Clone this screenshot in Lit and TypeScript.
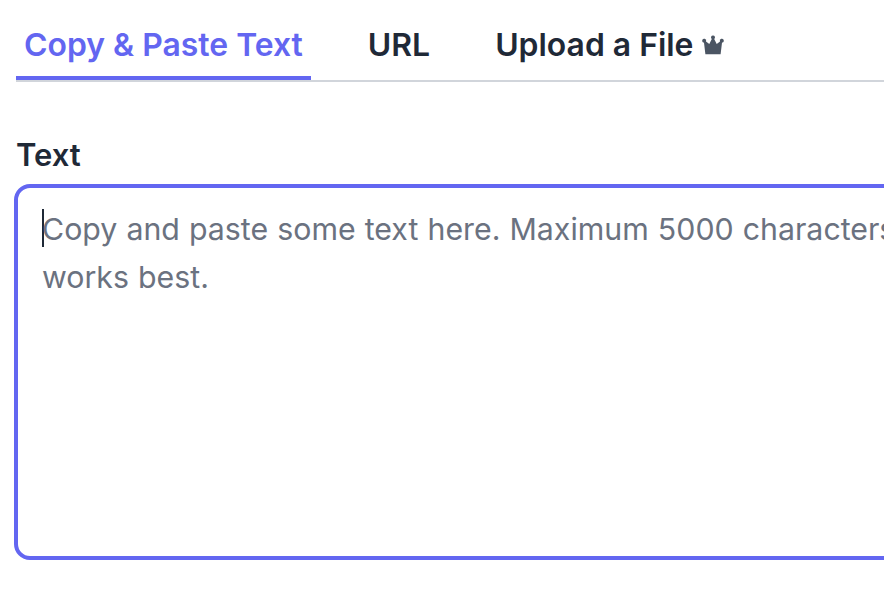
import { LitElement, html, css } from "lit";
import { customElement } from "lit/decorators.js";

@customElement("app-root")
export class AppRoot extends LitElement {
  static styles = css`
    :host {
      display: block;
      width: 884px;
      height: 606px;
      overflow: hidden;
      background: #fff;
      font-family: Inter, "Liberation Sans", sans-serif;
      color: #1f2937;
    }
    .page {
      width: 1200px;
      padding: 0 0 0 16px;
      box-sizing: border-box;
    }
    .tabs {
      display: flex;
      gap: 49px;
      height: 82px;
      box-sizing: border-box;
      border-bottom: 2px solid #d1d5db;
    }
    .tab {
      display: flex;
      align-items: center;
      gap: 8px;
      height: 80px;
      box-sizing: border-box;
      padding: 15px 8px 5px;
      font-size: 31.9px;
      font-weight: 600;
      line-height: 40px;
      white-space: nowrap;
    }
    .tab.active {
      color: #6366f1;
      border-bottom: 4px solid #6366f1;
      padding-bottom: 1px;
    }
    .crown {
      width: 24px;
      height: 20px;
      flex: none;
      fill: #4b5563;
      margin-bottom: 1px;
    }
    .label {
      margin: 55px 0 0;
      font-size: 31px;
      font-weight: 600;
      line-height: 36px;
    }
    .box {
      margin: 11px 0 0 -2px;
      height: 376px;
      box-sizing: border-box;
      border: 4px solid #6366f1;
      border-radius: 16px;
      padding: 17px 24px;
      font-size: 30.3px;
      word-spacing: 0.6px;
      line-height: 48px;
      color: #6b7280;
      white-space: nowrap;
    }
    .caret {
      display: inline-block;
      width: 0;
      height: 38px;
      border-left: 2px solid #1f2937;
      margin-right: -2px;
      vertical-align: -7px;
    }
  `;

  render() {
    return html`
      <div class="page">
        <nav class="tabs">
          <div class="tab active">Copy &amp; Paste Text</div>
          <div class="tab">URL</div>
          <div class="tab">
            Upload a File
            <svg class="crown" viewBox="0 0 24 20" aria-hidden="true">
              <path d="M12 0.500a2 2 0 0 1 1.200 3.600l2.500 5 3.300-2.600a2 2 0 1 1 2 1.200L19.600 19.200H4.400L3 7.700a2 2 0 1 1 2-1.200l3.300 2.600 2.500-5A2 2 0 0 1 12 0.500z" />
            </svg>
          </div>
        </nav>
        <p class="label">Text</p>
        <div class="box">
          <span class="caret"></span>Copy and paste some text here. Maximum 5000 characters. English<br />works best.
        </div>
      </div>
    `;
  }
}
